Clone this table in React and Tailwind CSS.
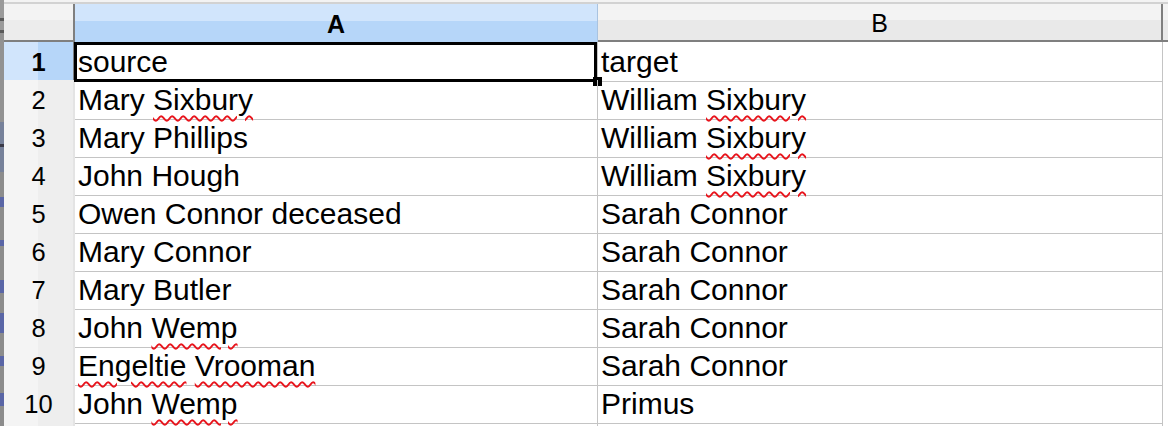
import React from 'react';

// Words the spell checker flags with the red wavy line
const misspelled = new Set(['Sixbury', 'Wemp', 'Engeltie', 'Vrooman']);

const rows = [
    ['source', 'target'],
    ['Mary Sixbury', 'William Sixbury'],
    ['Mary Phillips', 'William Sixbury'],
    ['John Hough', 'William Sixbury'],
    ['Owen Connor deceased', 'Sarah Connor'],
    ['Mary Connor', 'Sarah Connor'],
    ['Mary Butler', 'Sarah Connor'],
    ['John Wemp', 'Sarah Connor'],
    ['Engeltie Vrooman', 'Sarah Connor'],
    ['John Wemp', 'Primus'],
    ['', ''],
];

// Segments of the window peeking in on the far left edge
const strip = [
    ['h-[18px]', 'bg-[#9a9a9a]'],
    ['h-[3px]', 'bg-[#5a5a5a]'],
    ['h-[9px]', 'bg-[#9a9a9a]'],
    ['h-[3px]', 'bg-[#5a5a5a]'],
    ['h-[89px]', 'bg-[#929292]'],
    ['h-[22px]', 'bg-[#76819a]'],
    ['h-[3px]', 'bg-[#3a3a48]'],
    ['h-[25px]', 'bg-[#76819a]'],
    ['h-[25px]', 'bg-[#8c8c8c]'],
    ['h-[10px]', 'bg-[#5a66a6]'],
    ['h-[33px]', 'bg-[#8c8c8c]'],
    ['h-[6px]', 'bg-[#5a66a6]'],
    ['h-[34px]', 'bg-[#8c8c8c]'],
    ['h-[13px]', 'bg-[#5a66a6]'],
    ['h-[20px]', 'bg-[#8c8c8c]'],
    ['h-[20px]', 'bg-[#5a66a6]'],
    ['h-[23px]', 'bg-[#8c8c8c]'],
    ['h-[10px]', 'bg-[#5a66a6]'],
    ['h-[27px]', 'bg-[#8c8c8c]'],
    ['h-[13px]', 'bg-[#5a66a6]'],
    ['h-[20px]', 'bg-[#8c8c8c]'],
];

const CellText = ({ text }) => {
    const words = text.split(' ');
    return (
        <span className="whitespace-pre">
            {words.map((w, i) => (
                <React.Fragment key={i}>
                    {i > 0 && ' '}
                    {misspelled.has(w) ? (
                        <span className="underline decoration-wavy decoration-[#e8141c] decoration-[1.5px] underline-offset-[5px]">
                            {w}
                        </span>
                    ) : (
                        w
                    )}
                </React.Fragment>
            ))}
        </span>
    );
};

const App = () => {
    return (
        <div className="w-[1168px] h-[426px] overflow-hidden bg-white flex font-['Liberation_Sans',Arial,sans-serif] text-black">
            {/* left edge of the window behind */}
            <div className="w-[4px] flex flex-col shrink-0">
                {strip.map(([h, bg], i) => (
                    <div key={i} className={`${h} ${bg} shrink-0`} />
                ))}
            </div>

            <div className="flex-1 flex flex-col min-w-0">
                <div className="h-[2px] bg-[#f3f3f3] shrink-0" />
                <div className="h-[2px] bg-[#d2d2d2] shrink-0" />

                {/* column headers */}
                <div className="grid grid-cols-[71px_523px_565px_1fr] h-[38px] shrink-0 text-[25px] leading-none">
                    <div className="bg-[linear-gradient(to_bottom,#f3f3f3_45%,#ececec_45%)] border-r-2 border-b-2 border-[#7f7f7f]" />
                    <div className="bg-[linear-gradient(to_bottom,#d1e5fc_45%,#b6d6f9_45%)] border-r border-[#a9c3e0] flex items-center justify-center font-bold pt-[2px]">
                        A
                    </div>
                    <div className="bg-[linear-gradient(to_bottom,#f3f3f3_45%,#e9e9e9_45%)] border-r-2 border-b-2 border-[#7f7f7f] flex items-center justify-center pt-[2px]">
                        B
                    </div>
                    <div className="bg-[linear-gradient(to_bottom,#f3f3f3_45%,#e9e9e9_45%)] border-b-2 border-[#7f7f7f]" />
                </div>

                {/* rows */}
                <div className="flex flex-col">
                    {rows.map(([a, b], i) => {
                        const selected = i === 0;
                        return (
                            <div key={i} className="grid grid-cols-[71px_523px_565px_1fr] h-[38px] shrink-0">
                                <div
                                    className={
                                        selected
                                            ? 'bg-[linear-gradient(to_right,#d1e5fc_50%,#b6d6f9_50%)] border-b border-[#8fb6e4] border-r-2 border-r-[#7f7f7f] flex items-center justify-center text-[25.5px] font-bold pt-[1px]'
                                            : 'bg-[linear-gradient(to_right,#f4f4f4_50%,#eeeeee_50%)] border-b border-[#a3a3a3] border-r-2 border-r-[#e4e4e4] flex items-center justify-center text-[25.5px] pt-[1px]'
                                    }
                                >
                                    {i < 10 ? i + 1 : ''}
                                </div>
                                <div className="relative border-b border-r border-[#c4c4c4] pl-[3px] pt-[2px] text-[30px] leading-[35px]">
                                    <CellText text={a} />
                                    {selected && (
                                        <>
                                            <div className="absolute -left-[1px] top-0 right-0 -bottom-[1px] border-[3px] border-black" />
                                            <div className="absolute -right-[5px] -bottom-[5px] w-[9px] h-[9px] bg-black" />
                                        </>
                                    )}
                                </div>
                                <div className="border-b border-r border-[#c4c4c4] pl-[3px] pt-[2px] text-[30px] leading-[35px]">
                                    <CellText text={b} />
                                </div>
                                <div />
                            </div>
                        );
                    })}
                </div>
            </div>
        </div>
    );
};

export default App;
